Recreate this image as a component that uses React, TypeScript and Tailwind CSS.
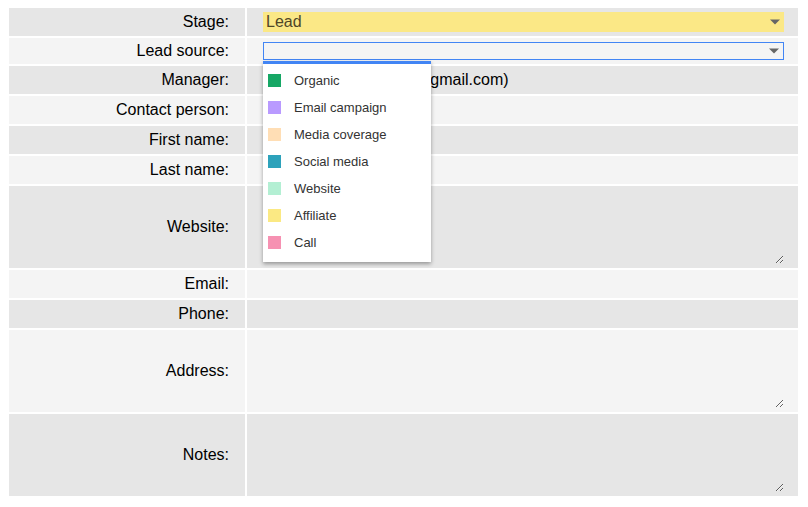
import React from 'react';

type Source = { label: string; color: string };

const sources: Source[] = [
  { label: 'Organic', color: 'bg-[#16a765]' },
  { label: 'Email campaign', color: 'bg-[#b99aff]' },
  { label: 'Media coverage', color: 'bg-[#ffdeb5]' },
  { label: 'Social media', color: 'bg-[#2da2bb]' },
  { label: 'Website', color: 'bg-[#b3efd3]' },
  { label: 'Affiliate', color: 'bg-[#fbe983]' },
  { label: 'Call', color: 'bg-[#f691b2]' },
];

function Arrow() {
  return (
    <span className="absolute right-[4px] top-1/2 -translate-y-1/2 w-0 h-0 border-l-[5px] border-r-[5px] border-t-[5px] border-l-transparent border-r-transparent border-t-[#666]" />
  );
}

function Row({
  label,
  dark,
  tall,
  short,
  children,
}: {
  label: string;
  dark: boolean;
  tall?: boolean;
  short?: boolean;
  children?: React.ReactNode;
}) {
  const h = tall ? 'h-[82px]' : short ? 'h-[26px]' : 'h-[28px]';
  const bg = dark ? 'bg-[#e6e6e6]' : 'bg-[#f4f4f4]';
  return (
    <>
      <div className={`${h} ${bg} flex items-center justify-end pr-[16px] text-[16px] text-black`}>
        {label}
      </div>
      <div className={`${h} ${bg} relative flex items-center pl-[16px] pr-[14px]`}>{children}</div>
    </>
  );
}

function Area() {
  return (
    <textarea className="w-full h-[74px] bg-transparent border-0 outline-none resize-y p-0" />
  );
}

export default function App() {
  return (
    <div className="w-[808px] h-[507px] bg-white pt-[8px] pl-[9px] font-['Liberation_Sans',Arial,sans-serif]">
      <div className="grid grid-cols-[236px_551px] gap-[2px]">
        <Row label="Stage:" dark>
          <div className="relative w-full h-[20px] bg-[#fbe886] pl-[3px] text-[16px] leading-[20px] text-[#4f4628]">
            Lead
            <Arrow />
          </div>
        </Row>
        <Row label="Lead source:" dark={false} short>
          <div className="relative w-full h-[18px] border border-[#4285f4]">
            <Arrow />
          </div>
          {/* open dropdown list */}
          <div className="absolute left-[16px] top-[23px] z-10 w-[168px] bg-white border-t-[3px] border-[#4285f4] pt-[3px] pb-[6px] shadow-[0_2px_4px_rgba(0,0,0,0.35)]">
            {sources.map((s) => (
              <div key={s.label} className="h-[27px] flex items-center pl-[5px] text-[13px] text-[#333]">
                <span className={`w-[13px] h-[13px] ${s.color}`} />
                <span className="ml-[13px]">{s.label}</span>
              </div>
            ))}
          </div>
        </Row>
        <Row label="Manager:" dark>
          <span className="pl-[7px] text-[16px] text-black whitespace-nowrap">John Doe (johndoe1@gmail.com)</span>
        </Row>
        <Row label="Contact person:" dark={false} />
        <Row label="First name:" dark />
        <Row label="Last name:" dark={false} />
        <Row label="Website:" dark tall>
          <Area />
        </Row>
        <Row label="Email:" dark={false} />
        <Row label="Phone:" dark />
        <Row label="Address:" dark={false} tall>
          <Area />
        </Row>
        <Row label="Notes:" dark tall>
          <Area />
        </Row>
      </div>
    </div>
  );
}
